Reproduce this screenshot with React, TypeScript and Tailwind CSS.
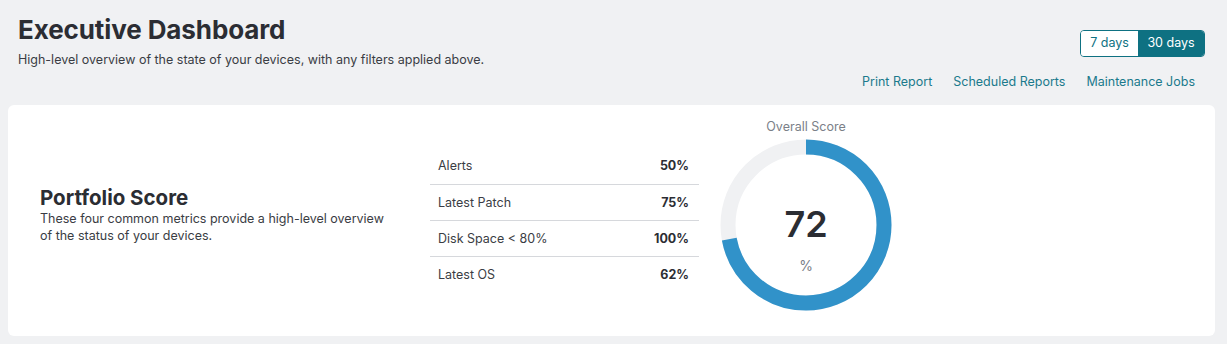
const metrics = [
  { label: "Alerts", value: "50%" },
  { label: "Latest Patch", value: "75%" },
  { label: "Disk Space < 80%", value: "100%" },
  { label: "Latest OS", value: "62%" },
]

function Gauge({ score }: { score: number }) {
  const r = 78
  const c = 2 * Math.PI * r
  return (
    <div className="relative w-[180px] h-[180px]">
      <svg width="180" height="180" viewBox="0 0 180 180">
        <circle cx="90" cy="90" r={r} fill="none" stroke="#f0f1f3" strokeWidth="15" />
        <circle
          cx="90"
          cy="90"
          r={r}
          fill="none"
          stroke="#3192c9"
          strokeWidth="15"
          strokeDasharray={`${(c * score) / 100} ${c}`}
          transform="rotate(-90 90 90)"
        />
      </svg>
      <div className="absolute inset-0 flex items-center justify-center">
        <div className="text-[36px] font-semibold leading-none text-[#2b2d33] mt-[-3px]">{score}</div>
      </div>
      <div className="absolute left-0 right-0 top-[122px] text-center text-[14px] leading-[17px] text-[#7b7f88]">%</div>
    </div>
  )
}

export default function App() {
  return (
    <div className="min-h-[344px] bg-[#f0f1f3] pl-2 pr-3 font-['Inter',sans-serif] text-[#2b2d33]">
      {/* HEADER */}
      <div className="flex justify-between pl-[10px] pr-[10px] pt-[14px]">
        <div>
          <h1 className="text-[26px] font-bold leading-[32px] tracking-[-0.1px]">Executive Dashboard</h1>
          <p className="text-[12.5px] text-[#3a3d44] mt-[5px]">
            High-level overview of the state of your devices, with any filters applied above.
          </p>
        </div>
        <div className="flex flex-col items-end pt-[16px]">
          <div className="flex h-[27px] rounded border border-[#0e7182] overflow-hidden text-[12.5px]">
            <button className="w-[57px] bg-white text-[#0e7182]">7 days</button>
            <button className="w-[66px] bg-[#0e7182] text-white">30 days</button>
          </div>
          <div className="flex gap-[21px] mt-[16px] pr-[10px] text-[12.5px] text-[#1b7a8c]">
            <a>Print Report</a>
            <a>Scheduled Reports</a>
            <a>Maintenance Jobs</a>
          </div>
        </div>
      </div>

      {/* PORTFOLIO CARD */}
      <div className="mt-[13px] h-[231px] bg-white rounded-md flex items-center pl-8">
        <div className="w-[390px] pr-[34px] mt-[-10px]">
          <h2 className="text-[20.5px] font-bold leading-6">Portfolio Score</h2>
          <p className="text-[12.5px] leading-[17px] text-[#3a3d44]">
            These four common metrics provide a high-level overview of the status of your devices.
          </p>
        </div>
        <div className="w-[269px] text-[12.5px]">
          {metrics.map((m, i) => (
            <div
              key={m.label}
              className={`flex justify-between items-center h-[36px] pt-px pl-2 pr-[10px] ${
                i > 0 ? "border-t border-[#d6d8dc]" : ""
              }`}
            >
              <span className="text-[#3a3d44]">{m.label}</span>
              <span className="font-bold">{m.value}</span>
            </div>
          ))}
        </div>
        <div className="ml-[17px] flex flex-col items-center mt-[-6px]">
          <div className="text-[12.5px] leading-[15px] mb-px text-[#7b7f88]">Overall Score</div>
          <Gauge score={72} />
        </div>
      </div>
    </div>
  )
}
